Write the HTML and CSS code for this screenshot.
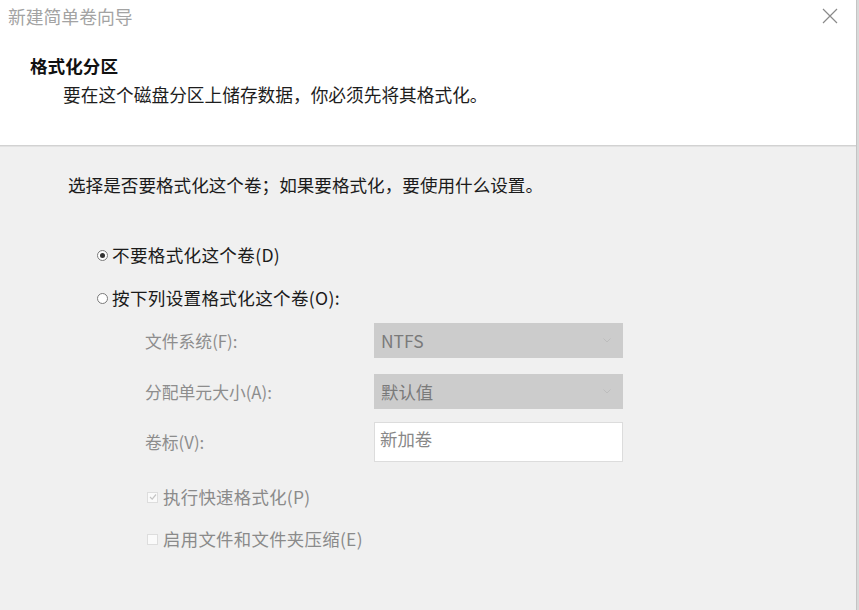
FILE: index.html
```html
<!DOCTYPE html>
<html lang="zh-CN">
<head>
<meta charset="utf-8">
<title>新建简单卷向导</title>
<link rel="stylesheet" href="styles.css">
</head>
<body>
<div class="dialog">
  <div class="top">
    <div class="titlebar">
      <span class="title">新建简单卷向导</span>
      <span class="close">
        <svg width="16" height="16" viewBox="0 0 16 16"><path d="M1 1 L15 15 M15 1 L1 15" stroke="#8a8a8a" stroke-width="1.2" fill="none"/></svg>
      </span>
    </div>
    <div class="header">
      <div class="heading">格式化分区</div>
      <div class="subtitle">要在这个磁盘分区上储存数据，你必须先将其格式化。</div>
    </div>
  </div>
  <div class="content">
    <div class="instruction">选择是否要格式化这个卷；如果要格式化，要使用什么设置。</div>
    <div class="options">
      <div class="radio-row"><span class="radio checked"></span><span>不要格式化这个卷(D)</span></div>
      <div class="radio-row"><span class="radio"></span><span>按下列设置格式化这个卷(O):</span></div>
    </div>
    <div class="form">
      <div class="form-row">
        <span class="label">文件系统(F):</span>
        <div class="select"><span>NTFS</span><span class="chev"><svg width="8" height="5" viewBox="0 0 8 5"><path d="M0.5 0.5 L4 4 L7.5 0.5" stroke="#bdbdbd" stroke-width="1" fill="none"/></svg></span></div>
      </div>
      <div class="form-row">
        <span class="label">分配单元大小(A):</span>
        <div class="select"><span>默认值</span><span class="chev"><svg width="8" height="5" viewBox="0 0 8 5"><path d="M0.5 0.5 L4 4 L7.5 0.5" stroke="#bdbdbd" stroke-width="1" fill="none"/></svg></span></div>
      </div>
      <div class="form-row row-text">
        <span class="label">卷标(V):</span>
        <div class="textbox">新加卷</div>
      </div>
    </div>
    <div class="checks">
      <div class="check-row"><span class="checkbox"><svg width="8" height="8" viewBox="0 0 8 8"><path d="M1 4 L3.2 6.2 L7 1.5" stroke="#c4c4c4" stroke-width="1.2" fill="none"/></svg></span><span>执行快速格式化(P)</span></div>
      <div class="check-row"><span class="checkbox"></span><span>启用文件和文件夹压缩(E)</span></div>
    </div>
  </div>
</div>
</body>
</html>
```
FILE: styles.css
```css
html, body {
  margin: 0;
  padding: 0;
  background: #d9d9d9;
}
body {
  font-family: "Noto Sans CJK SC", "Microsoft YaHei", sans-serif;
  font-size: 17.6px;
  color: #1b1b1b;
}
.dialog {
  width: 856px;
  height: 610px;
  border-right: 1px solid #c4c4c4;
  background: #f0f0f0;
  display: flex;
  flex-direction: column;
}
.top {
  background: #ffffff;
  height: 145px;
  border-bottom: 1px solid #d2d2d2;
  box-shadow: 0 1px 0 #e2e2e2;
  display: flex;
  flex-direction: column;
}
.titlebar {
  height: 32px;
  display: flex;
  align-items: center;
  justify-content: space-between;
  padding: 0 18px 0 8px;
}
.title {
  color: #a3a3a3;
  font-size: 17.8px;
  line-height: 22px;
}
.close {
  display: flex;
  width: 16px;
  height: 16px;
}
.header {
  padding: 23px 0 0 30px;
}
.heading {
  font-weight: bold;
  font-size: 17.6px;
  line-height: 22px;
  color: #111;
}
.subtitle {
  margin: 6px 0 0 33px;
  line-height: 22px;
  font-size: 17.7px;
  color: #1d1d1d;
}
.content {
  padding: 28px 0 0 68px;
  display: flex;
  flex-direction: column;
}
.instruction {
  line-height: 22px;
  font-size: 17.6px;
}
.options {
  margin: 48px 0 0 29px;
  display: flex;
  flex-direction: column;
  gap: 21px;
}
.radio-row {
  display: flex;
  align-items: center;
  line-height: 22px;
  gap: 4px;
  font-size: 17.6px;
  letter-spacing: 0.3px;
}
.radio {
  width: 9px;
  height: 9px;
  border: 1px solid #7a7a7a;
  border-radius: 50%;
  background: #fff;
  box-sizing: content-box;
  position: relative;
  flex: none;
}
.radio.checked::after {
  content: "";
  position: absolute;
  left: 2px;
  top: 2px;
  width: 5px;
  height: 5px;
  border-radius: 50%;
  background: #333;
}
.form {
  margin: 14px 0 0 77px;
  display: flex;
  flex-direction: column;
  gap: 16px;
}
.form-row {
  display: flex;
  align-items: center;
}
.row-text {
  margin-top: -3px;
}
.label {
  width: 229px;
  color: #8d8d8d;
  line-height: 22px;
  font-size: 16.8px;
}
.select {
  width: 249px;
  height: 35px;
  background: #cccccc;
  color: #7a7a7a;
  display: flex;
  align-items: center;
  justify-content: space-between;
  padding: 0 12px 0 7px;
  box-sizing: border-box;
  font-size: 17.4px;
}
.chev {
  display: flex;
}
.textbox {
  width: 249px;
  height: 40px;
  background: #fff;
  border: 1px solid #dcdcdc;
  box-sizing: border-box;
  color: #888;
  padding: 5px 0 0 5px;
  line-height: 22px;
  font-size: 17.4px;
}
.checks {
  margin: 24px 0 0 79px;
  display: flex;
  flex-direction: column;
  gap: 20px;
}
.check-row {
  display: flex;
  align-items: center;
  line-height: 22px;
  gap: 5px;
  color: #8a8a8a;
  font-size: 17.4px;
  letter-spacing: 0.3px;
}
.checkbox {
  width: 9px;
  height: 9px;
  border: 1px solid #dddddd;
  background: #fafafa;
  box-sizing: content-box;
  display: flex;
  align-items: center;
  justify-content: center;
  flex: none;
}
```
